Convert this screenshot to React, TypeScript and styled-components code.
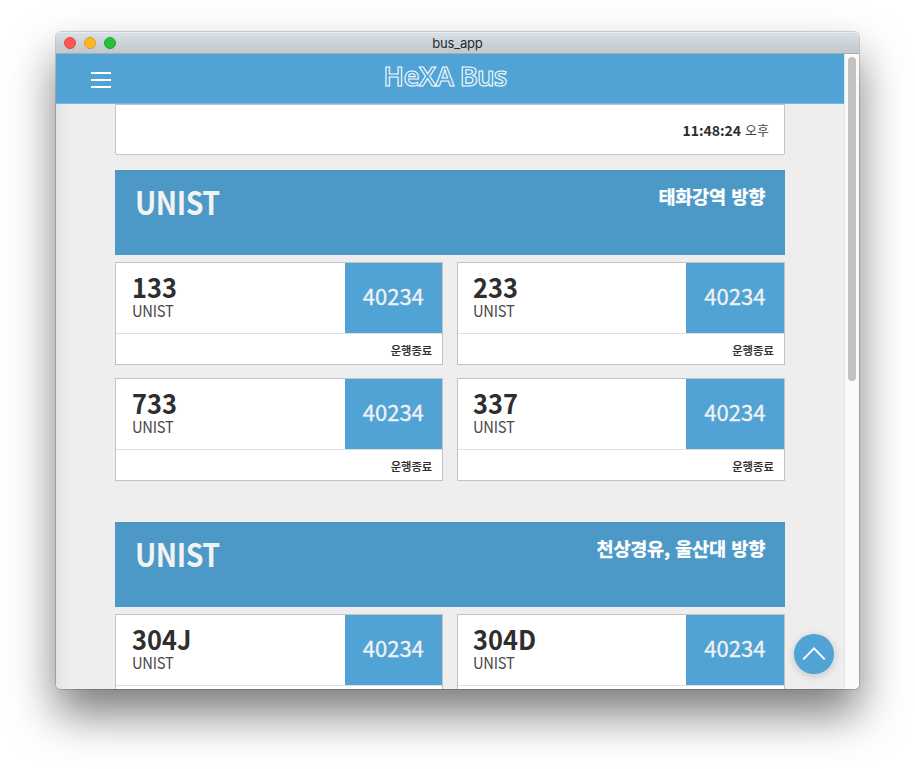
import React from 'react';
import styled, { createGlobalStyle } from 'styled-components';

const GlobalStyle = createGlobalStyle`
  * { box-sizing: border-box; }
  body {
    margin: 0;
    background: #fff;
    font-family: "Noto Sans CJK KR", sans-serif;
    color: #2e2e2e;
    overflow: hidden;
  }
`;

const Desktop = styled.div`
  width: 915px;
  height: 769px;
  padding: 32px 0 0 56px;
  overflow: hidden;
`;

const WindowFrame = styled.div`
  width: 803px;
  height: 657px;
  border-radius: 5px;
  box-shadow: 0 0 0 1px rgba(0, 0, 0, 0.16), 0 25px 46px rgba(0, 0, 0, 0.52);
`;

const Window = styled.div`
  position: relative;
  width: 803px;
  height: 657px;
  display: flex;
  flex-direction: column;
  border-radius: 5px;
  overflow: hidden;
  background: #eee;
`;

const TitleBar = styled.div`
  flex: none;
  height: 22px;
  display: grid;
  grid-template-columns: 100px 1fr 100px;
  align-items: center;
  background: linear-gradient(#d9e0e5, #c0c8cd);
  border-top: 1px solid #e8eef1;
  border-bottom: 1px solid #a5adb2;
`;

const Lights = styled.div`
  display: flex;
  gap: 8px;
  padding-left: 8px;
`;

const Light = styled.span<{ $fill: string; $edge: string }>`
  width: 12px;
  height: 12px;
  border-radius: 50%;
  background: ${p => p.$fill};
  border: 1px solid ${p => p.$edge};
`;

const WindowTitle = styled.div`
  text-align: center;
  font: 13px/20px Inter, sans-serif;
  letter-spacing: -0.2px;
  color: #262a2d;
`;

const Viewport = styled.div`
  flex: 1;
  min-height: 0;
  display: flex;
`;

const Page = styled.div`
  width: 788px;
  display: flex;
  flex-direction: column;
  overflow: hidden;
`;

const Header = styled.header`
  flex: none;
  height: 50px;
  display: grid;
  grid-template-columns: 90px 1fr 98px;
  background: #51a3d5;
  border-bottom: 1px solid #7db5d8;
`;

const MenuButton = styled.button`
  padding: 18px 0 0 35px;
  border: 0;
  background: none;
  display: flex;
  flex-direction: column;
  gap: 5px;
`;

const MenuLine = styled.span`
  width: 20px;
  height: 2px;
  background: #fff;
`;

const Brand = styled.div`
  padding-right: 2px;
  text-align: center;
  font-family: "Noto Sans", sans-serif;
  font-size: 27.5px;
  font-weight: 600;
  line-height: 44px;
  letter-spacing: -0.75px;
  white-space: nowrap;
  color: transparent;
  -webkit-text-stroke: 1.1px #f4fafd;
`;

const Scroller = styled.main`
  flex: 1;
  min-height: 0;
  overflow: hidden;
  padding: 0 59px;
  background: linear-gradient(90deg, #e0e4e7, #eee 13px);
`;

const ClockBar = styled.div`
  height: 51px;
  display: flex;
  justify-content: flex-end;
  align-items: center;
  gap: 4px;
  padding: 0 15px 0 0;
  background: #fff;
  border: 1px solid #c3c3c3;
  border-radius: 0 0 2px 2px;
  margin-bottom: 15px;
`;

const Time = styled.span`
  font-size: 14px;
  font-weight: 600;
`;

const Meridiem = styled.span`
  font-size: 13px;
  font-weight: 400;
  color: #444;
`;

const Section = styled.section`
  margin-bottom: 41px;
`;

const Banner = styled.div`
  height: 85px;
  display: flex;
  justify-content: space-between;
  align-items: flex-start;
  padding: 13px 20px 0 20px;
  background: #4c98c6;
  margin-bottom: 7px;
`;

const Origin = styled.h1`
  margin: -2px 0 0;
  font-size: 32px;
  font-weight: 700;
  line-height: 40px;
  letter-spacing: -0.5px;
  color: #f1f2f3;
  transform: scaleX(0.89);
  transform-origin: 0 0;
`;

const Direction = styled.h2`
  margin: 0;
  font-size: 18.6px;
  font-weight: 700;
  line-height: 25px;
  letter-spacing: -0.25px;
  word-spacing: 1.5px;
  color: #fff;
  -webkit-text-stroke: 0.3px #fff;
`;

const CardGrid = styled.div`
  display: grid;
  grid-template-columns: 328.4px 328.4px;
  gap: 13px 13.2px;
`;

const Card = styled.article`
  height: 103px;
  background: #fff;
  border: 1px solid #c3c3c3;
`;

const CardTop = styled.div`
  height: 71px;
  display: flex;
  justify-content: space-between;
  border-bottom: 1px solid #dedede;
`;

const Route = styled.div`
  padding: 9px 0 0 15.6px;
`;

const RouteNumber = styled.div`
  font-size: 27px;
  font-weight: 700;
  line-height: 30px;
  transform: scaleX(0.94);
  transform-origin: 0 0;
`;

const RouteStop = styled.div`
  font-size: 16px;
  font-weight: 400;
  line-height: 17px;
  letter-spacing: -0.3px;
  color: #484848;
  transform: scaleX(0.92);
  transform-origin: 0 0;
`;

const StopCode = styled.div`
  width: 97.6px;
  height: 70px;
  padding-right: 0.6px;
  text-align: center;
  font-size: 22px;
  line-height: 65px;
  color: #f0f2f3;
  background: #51a3d5;
  -webkit-text-stroke: 0.3px #f0f2f3;
`;

const Status = styled.div`
  padding-right: 10.2px;
  text-align: right;
  font-size: 11.3px;
  font-weight: 500;
  line-height: 32px;
  -webkit-text-stroke: 0.2px #2e2e2e;
`;

const ScrollTrack = styled.div`
  width: 15px;
  padding: 3px 3px 0;
  background: #fafafa;
  border-left: 1px solid #e3e3e3;
`;

const ScrollThumb = styled.div`
  width: 8px;
  height: 324px;
  border-radius: 4px;
  background: #c1c1c1;
`;

const TopButton = styled.button`
  position: absolute;
  left: 738px;
  top: 602px;
  width: 40px;
  height: 40px;
  padding: 0;
  border: 0;
  border-radius: 50%;
  background: #51a3d5;
  box-shadow: 0 2px 8px rgba(0, 0, 0, 0.18);

  svg { display: block; }
`;

const sections = [
  { direction: '태화강역 방향', routes: ['133', '233', '733', '337'] },
  { direction: '천상경유, 울산대 방향', routes: ['304J', '304D'] },
];

function BusCard({ number }: { number: string }) {
  return (
    <Card>
      <CardTop>
        <Route>
          <RouteNumber>{number}</RouteNumber>
          <RouteStop>UNIST</RouteStop>
        </Route>
        <StopCode>40234</StopCode>
      </CardTop>
      <Status>운행종료</Status>
    </Card>
  );
}

export default function App() {
  return (
    <Desktop>
      <GlobalStyle />
      <WindowFrame>
        <Window>
          <TitleBar>
            <Lights>
              <Light $fill="#fc5753" $edge="#df4744" />
              <Light $fill="#fdb727" $edge="#de9b25" />
              <Light $fill="#27c138" $edge="#1ea72d" />
            </Lights>
            <WindowTitle>bus_app</WindowTitle>
          </TitleBar>
          <Viewport>
            <Page>
              <Header>
                <MenuButton aria-label="Menu">
                  <MenuLine />
                  <MenuLine />
                  <MenuLine />
                </MenuButton>
                <Brand>HeXA Bus</Brand>
              </Header>
              <Scroller>
                <ClockBar>
                  <Time>11:48:24</Time>
                  <Meridiem>오후</Meridiem>
                </ClockBar>
                {sections.map(s => (
                  <Section key={s.direction}>
                    <Banner>
                      <Origin>UNIST</Origin>
                      <Direction>{s.direction}</Direction>
                    </Banner>
                    <CardGrid>
                      {s.routes.map(r => <BusCard key={r} number={r} />)}
                    </CardGrid>
                  </Section>
                ))}
              </Scroller>
            </Page>
            <ScrollTrack><ScrollThumb /></ScrollTrack>
          </Viewport>
          <TopButton aria-label="Back to top">
            <svg width="40" height="40" viewBox="0 0 40 40" fill="none" stroke="#fff" strokeWidth="1.9">
              <path d="M9.3 25.3L20 14.4L30.7 25.3" />
            </svg>
          </TopButton>
        </Window>
      </WindowFrame>
    </Desktop>
  );
}
